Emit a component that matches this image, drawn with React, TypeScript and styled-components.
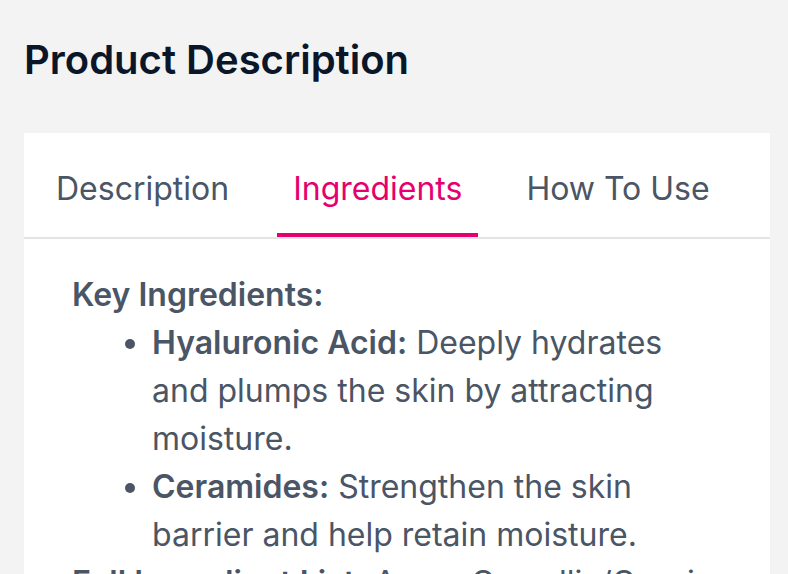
import React, { useState } from "react";
import styled, { createGlobalStyle } from "styled-components";

const GlobalStyle = createGlobalStyle`
  html, body {
    margin: 0;
    padding: 0;
    background: #f3f3f3;
    font-family: Inter, "Noto Sans", sans-serif;
  }
`;

const tabs = ["Description", "Ingredients", "How To Use"];

const App = (): JSX.Element => {
  const [active, setActive] = useState(1);

  return (
    <Page>
      <GlobalStyle />
      <Title>Product Description</Title>
      <Card>
        <TabBar>
          {tabs.map((t, i) => (
            <Tab key={t} $active={i === active} onClick={() => setActive(i)}>
              {t}
            </Tab>
          ))}
        </TabBar>
        <Body>
          <Heading>Key Ingredients:</Heading>
          <List>
            <li>
              <strong>Hyaluronic Acid:</strong> Deeply hydrates and plumps the
              skin by attracting moisture.
            </li>
            <li>
              <strong>Ceramides:</strong> Strengthen the skin barrier and help
              retain moisture.
            </li>
          </List>
          <Para>
            <strong>Full Ingredient List:</strong> Aqua, Camellia/Cassia
            Extract, Glycerin, Sodium Hyaluronate, Ceramide NP, Niacinamide.
          </Para>
        </Body>
      </Card>
    </Page>
  );
};

export default App;

const Page = styled.main`
  padding: 32px 18px 0 24px;
`;

const Title = styled.h1`
  margin: 0 0 45px;
  font-size: 40px;
  line-height: 56px;
  font-weight: 600;
  color: #0b1629;
`;

const Card = styled.section`
  background: #fff;
`;

const TabBar = styled.div`
  display: flex;
  gap: 32px;
  padding: 0 16px;
  border-bottom: 2px solid #e3e3e3;
`;

const Tab = styled.button<{ $active: boolean }>`
  background: none;
  border: none;
  font-family: inherit;
  font-size: 32px;
  line-height: 48px;
  padding: 32px 16px 20px;
  cursor: pointer;
  color: ${(p) => (p.$active ? "#e6006e" : "#4a5565")};
  border-bottom: 4px solid ${(p) => (p.$active ? "#e6006e" : "transparent")};
`;

const Body = styled.div`
  padding: 32px 48px 0;
  font-size: 32px;
  line-height: 48px;
  color: #4a5565;

  strong {
    font-weight: 600;
  }
`;

const Heading = styled.p`
  margin: 0;
  font-weight: 600;
`;

const List = styled.ul`
  margin: 0;
  padding-left: 80px;
  list-style: disc;
`;

const Para = styled.p`
  margin: 0;
`;
